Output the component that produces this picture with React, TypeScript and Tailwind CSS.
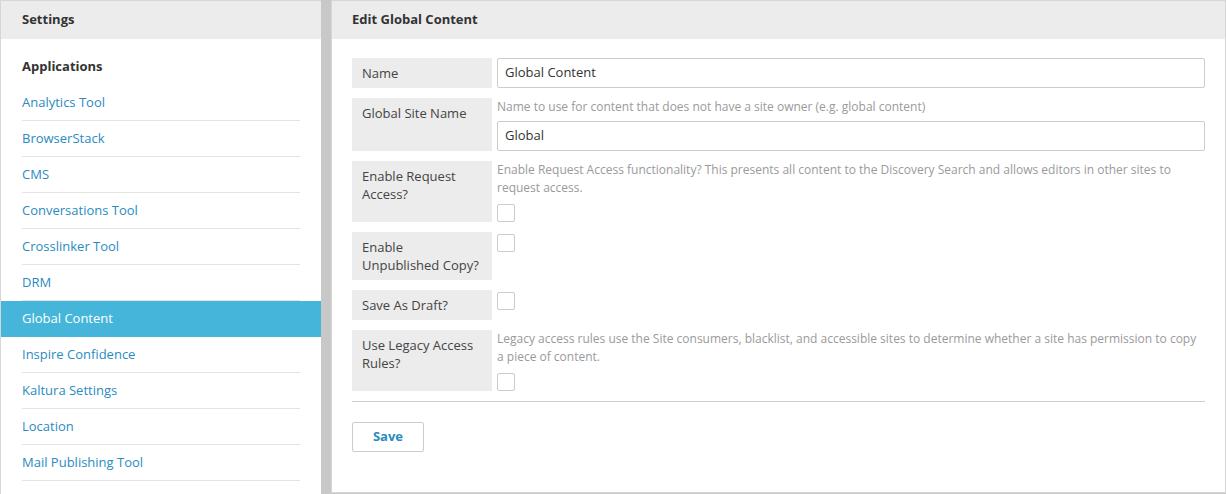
import React from "react";

const apps = [
  "Analytics Tool",
  "BrowserStack",
  "CMS",
  "Conversations Tool",
  "Crosslinker Tool",
  "DRM",
  "Global Content",
  "Inspire Confidence",
  "Kaltura Settings",
  "Location",
  "Mail Publishing Tool",
];

function Checkbox() {
  return <div className="mt-[2px] h-[18px] w-[18px] rounded-[2px] border border-[#cccccc] bg-white" />;
}

function Row({ label, children }: { label: React.ReactNode; children: React.ReactNode }) {
  return (
    <div className="mb-[10px] flex gap-[5px]">
      <div className="w-[140px] shrink-0 bg-[#ececec] px-[10px] py-[6px] text-[13px] leading-[18px] text-[#444]">
        {label}
      </div>
      <div className="flex flex-1 flex-col">{children}</div>
    </div>
  );
}

function Help({ children }: { children: React.ReactNode }) {
  return <p className="mb-[5px] text-[12px] leading-[18px] text-[#9a9a9a]">{children}</p>;
}

export default function App() {
  return (
    <div className="flex h-[494px] w-[1226px] overflow-hidden bg-white font-['Open_Sans',sans-serif]">
      {/* Settings sidebar */}
      <div className="h-[494px] w-[321px] shrink-0 border-l border-t border-[#d6d6d6] bg-white">
        <div className="flex h-[38px] items-center bg-[#ececec] px-[21px] text-[13px] font-bold text-[#333]">
          Settings
        </div>
        <div className="pt-[10px]">
          <div className="flex h-[36px] items-center px-[21px] text-[13px] font-bold text-[#333]">Applications</div>
          {apps.map((a) =>
            a === "Global Content" ? (
              <div key={a} className="flex h-[36px] items-center bg-[#45b6da] px-[21px] text-[13px] text-white">
                {a}
              </div>
            ) : (
              <div key={a} className="px-[21px]">
                <div className="flex h-[36px] items-center border-b border-[#e3e3e3] text-[13px] text-[#2a8bbf]">
                  {a}
                </div>
              </div>
            )
          )}
        </div>
      </div>

      <div className="h-[494px] w-[10px] shrink-0 bg-[#c8c8c8]" />

      {/* Edit panel */}
      <div className="flex h-[494px] flex-1 flex-col bg-[#c8c8c8]">
        <div className="h-[493px] border border-[#d6d6d6] bg-white">
          <div className="flex h-[38px] items-center bg-[#ececec] px-[20px] text-[13px] font-bold text-[#333]">
            Edit Global Content
          </div>
          <div className="px-[20px] pt-[19px]">
            <Row label="Name">
              <div className="flex h-[30px] items-center rounded-[2px] border border-[#cccccc] px-[7px] text-[13px] text-[#333]">
                Global Content
              </div>
            </Row>
            <Row label="Global Site Name">
              <Help>Name to use for content that does not have a site owner (e.g. global content)</Help>
              <div className="flex h-[30px] items-center rounded-[2px] border border-[#cccccc] px-[7px] text-[13px] text-[#333]">
                Global
              </div>
            </Row>
            <Row label="Enable Request Access?">
              <Help>
                Enable Request Access functionality? This presents all content to the Discovery Search and allows
                editors in other sites to request access.
              </Help>
              <Checkbox />
            </Row>
            <Row label="Enable Unpublished Copy?">
              <Checkbox />
            </Row>
            <Row label="Save As Draft?">
              <Checkbox />
            </Row>
            <Row label="Use Legacy Access Rules?">
              <Help>
                Legacy access rules use the Site consumers, blacklist, and accessible sites to determine whether a site
                has permission to copy a piece of content.
              </Help>
              <Checkbox />
            </Row>
            <div className="border-t border-[#cfcfcf] pt-[20px]">
              <button className="h-[30px] w-[72px] rounded-[2px] border border-[#cccccc] bg-white text-[13px] font-bold text-[#2a8bbf]">
                Save
              </button>
            </div>
          </div>
        </div>
      </div>
    </div>
  );
}
